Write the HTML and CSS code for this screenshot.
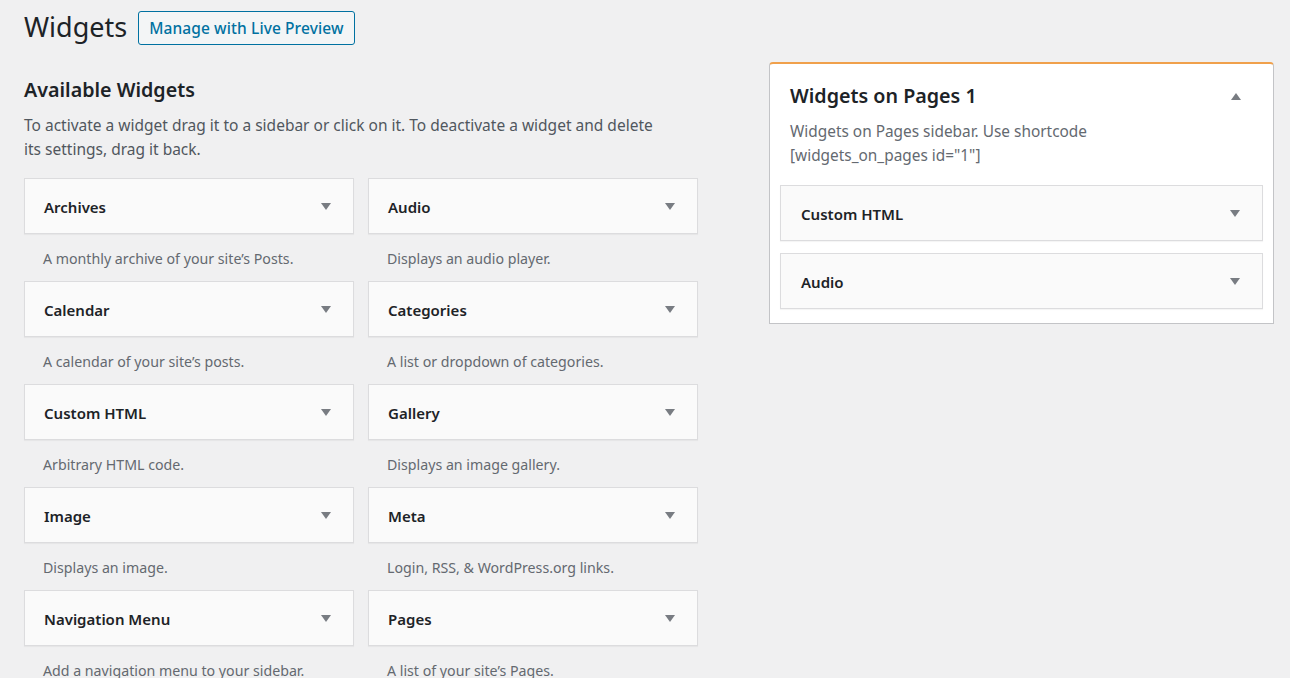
FILE: index.html
```html
<!DOCTYPE html>
<html>
<head>
<meta charset="utf-8">
<title>Widgets</title>
<link rel="stylesheet" href="styles.css">
</head>
<body>
<div class="wrap">
  <header class="page-head">
    <h1 class="page-title">Widgets</h1>
    <a class="btn-outline" href="#">Manage with Live Preview</a>
  </header>
  <div class="columns">
    <section class="available">
      <h2 class="section-title">Available Widgets</h2>
      <p class="section-desc">To activate a widget drag it to a sidebar or click on it. To deactivate a widget and delete its settings, drag it back.</p>
      <div class="widget-grid">
        <div class="widget-item"><div class="widget-top"><span>Archives</span><i class="arrow-down"></i></div><p class="widget-desc">A monthly archive of your site’s Posts.</p></div>
        <div class="widget-item"><div class="widget-top"><span>Audio</span><i class="arrow-down"></i></div><p class="widget-desc">Displays an audio player.</p></div>
        <div class="widget-item"><div class="widget-top"><span>Calendar</span><i class="arrow-down"></i></div><p class="widget-desc">A calendar of your site’s posts.</p></div>
        <div class="widget-item"><div class="widget-top"><span>Categories</span><i class="arrow-down"></i></div><p class="widget-desc">A list or dropdown of categories.</p></div>
        <div class="widget-item"><div class="widget-top"><span>Custom HTML</span><i class="arrow-down"></i></div><p class="widget-desc">Arbitrary HTML code.</p></div>
        <div class="widget-item"><div class="widget-top"><span>Gallery</span><i class="arrow-down"></i></div><p class="widget-desc">Displays an image gallery.</p></div>
        <div class="widget-item"><div class="widget-top"><span>Image</span><i class="arrow-down"></i></div><p class="widget-desc">Displays an image.</p></div>
        <div class="widget-item"><div class="widget-top"><span>Meta</span><i class="arrow-down"></i></div><p class="widget-desc">Login, RSS, &amp; WordPress.org links.</p></div>
        <div class="widget-item"><div class="widget-top"><span>Navigation Menu</span><i class="arrow-down"></i></div><p class="widget-desc">Add a navigation menu to your sidebar.</p></div>
        <div class="widget-item"><div class="widget-top"><span>Pages</span><i class="arrow-down"></i></div><p class="widget-desc">A list of your site’s Pages.</p></div>
      </div>
    </section>
    <aside class="sidebar-panel">
      <div class="panel-head">
        <h2 class="panel-title">Widgets on Pages 1</h2>
        <i class="arrow-up"></i>
      </div>
      <p class="panel-desc">Widgets on Pages sidebar. Use shortcode <span class="shortcode">[widgets_on_pages id="1"]</span></p>
      <div class="panel-widgets">
        <div class="widget-top inner"><span>Custom HTML</span><i class="arrow-down"></i></div>
        <div class="widget-top inner"><span>Audio</span><i class="arrow-down"></i></div>
      </div>
    </aside>
  </div>
</div>
</body>
</html>
```
FILE: styles.css
```css
* { box-sizing: border-box; }
html, body { margin: 0; padding: 0; }
body {
  background: #f0f0f1;
  color: #1d2327;
  font-family: "Noto Sans", "Open Sans", "Liberation Sans", sans-serif;
  overflow: hidden;
}
.wrap { padding: 0 0 0 24px; }
.page-head {
  display: flex;
  align-items: center;
  gap: 11px;
  height: 55px;
}
.page-title {
  margin: 0;
  font-size: 27px;
  font-weight: 400;
  line-height: 1;
  position: relative;
  top: -1px;
}
.btn-outline {
  display: inline-flex;
  align-items: center;
  height: 34px;
  padding: 0 10px;
  border: 1px solid #0071a1;
  border-radius: 3px;
  background: #f3f5f6;
  color: #0071a1;
  font-size: 15.5px;
  font-weight: 500;
  letter-spacing: 0.1px;
  text-decoration: none;
}
.columns {
  display: flex;
  align-items: flex-start;
  gap: 71px;
}
.available { width: 674px; flex: none; }
.section-title {
  margin: 21px 0 0;
  font-size: 19.7px;
  font-weight: 600;
  line-height: 27px;
}
.section-desc {
  margin: 10px 0 0;
  font-size: 15.5px;
  line-height: 24px;
  color: #50575e;
  max-width: 640px;
}
.widget-grid {
  margin-top: 17px;
  display: grid;
  grid-template-columns: 330px 330px;
  column-gap: 14px;
}
.widget-item { height: 103px; }
.widget-top {
  height: 56px;
  display: flex;
  align-items: center;
  justify-content: space-between;
  padding: 1px 22px 0 19px;
  background: #fafafa;
  border: 1px solid #dcdcde;
  box-shadow: 0 1px 1px rgba(0,0,0,0.04);
  font-size: 15px;
  font-weight: 600;
  color: #1d2327;
}
.widget-desc {
  margin: 0;
  padding: 14px 0 0 19px;
  font-size: 14.2px;
  line-height: 22px;
  color: #646970;
}
.arrow-down {
  display: block;
  width: 0;
  height: 0;
  border-left: 5px solid transparent;
  border-right: 5px solid transparent;
  border-top: 7px solid #787c82;
}
.arrow-up {
  display: block;
  width: 0;
  height: 0;
  border-left: 5px solid transparent;
  border-right: 5px solid transparent;
  border-bottom: 7px solid #787c82;
}
.sidebar-panel {
  margin-top: 7px;
  width: 505px;
  flex: none;
  background: #fff;
  border: 1px solid #c3c4c7;
  border-top: 2px solid #f0a04b;
  border-radius: 4px 4px 0 0;
  padding: 0 10px 14px;
}
.panel-head {
  display: flex;
  align-items: center;
  justify-content: space-between;
  padding: 18px 22px 0 10px;
}
.panel-title {
  margin: 0;
  font-size: 19.7px;
  font-weight: 600;
  line-height: 28px;
}
.panel-desc {
  margin: 10px 0 0;
  padding-left: 10px;
  font-size: 15.4px;
  line-height: 24px;
  color: #646970;
}
.shortcode { white-space: nowrap; }
.panel-widgets {
  margin-top: 17px;
  display: flex;
  flex-direction: column;
  gap: 12px;
}
.widget-top.inner { padding-left: 20px; padding-right: 22px; }
```
